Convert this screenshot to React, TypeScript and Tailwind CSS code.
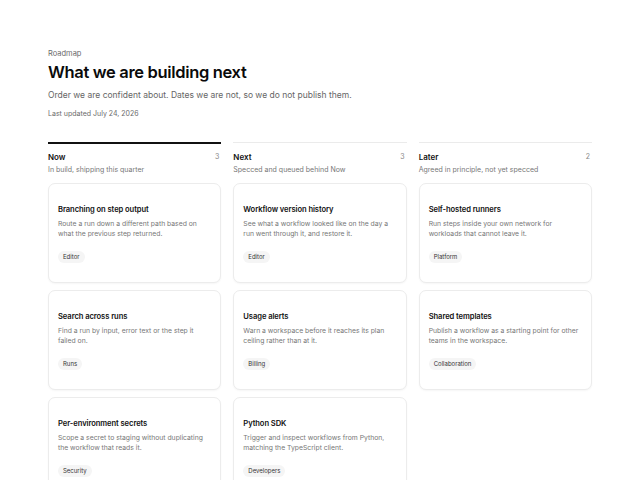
const columns = [
    {
        name: "Now",
        note: "In build, shipping this quarter",
        active: true,
        items: [
            { title: "Branching on step output", body: "Route a run down a different path based on what the previous step returned.", tag: "Editor" },
            { title: "Search across runs", body: "Find a run by input, error text or the step it failed on.", tag: "Runs" },
            { title: "Per-environment secrets", body: "Scope a secret to staging without duplicating the workflow that reads it.", tag: "Security" },
        ],
    },
    {
        name: "Next",
        note: "Specced and queued behind Now",
        active: false,
        items: [
            { title: "Workflow version history", body: "See what a workflow looked like on the day a run went through it, and restore it.", tag: "Editor" },
            { title: "Usage alerts", body: "Warn a workspace before it reaches its plan ceiling rather than at it.", tag: "Billing" },
            { title: "Python SDK", body: "Trigger and inspect workflows from Python, matching the TypeScript client.", tag: "Developers" },
        ],
    },
    {
        name: "Later",
        note: "Agreed in principle, not yet specced",
        active: false,
        items: [
            { title: "Self-hosted runners", body: "Run steps inside your own network for workloads that cannot leave it.", tag: "Platform" },
            { title: "Shared templates", body: "Publish a workflow as a starting point for other teams in the workspace.", tag: "Collaboration" },
        ],
    },
];

export default function App() {
    return (
        <main className="min-h-screen bg-white px-[48px] pt-[49px] pb-10 text-[#111] font-['Inter',sans-serif]">
            <p className="text-[7.5px] leading-[10px] text-[#6b6b6b]">Roadmap</p>
            <h1 className="mt-[2px] text-[16.5px] leading-[22px] font-semibold tracking-[-0.02em] text-[#0a0a0a]">What we are building next</h1>
            <p className="mt-[6px] text-[8.5px] leading-[12px] text-[#666]">
                Order we are confident about. Dates we are not, so we do not publish them.
            </p>
            <p className="mt-[8px] text-[7px] leading-[10px] text-[#6b6b6b]">Last updated July 24, 2026</p>

            <div className="mt-[23px] grid grid-cols-3 gap-[12px]">
                {columns.map((col) => (
                    <section key={col.name} className="flex flex-col">
                        <div className={col.active ? "h-[2px] bg-[#111]" : "h-[1px] bg-[#ebebeb]"} />
                        <div className={col.active ? "pt-[7px]" : "pt-[8px]"}>
                            <div className="flex items-center justify-between">
                                <h2 className="text-[8px] leading-[12px] font-semibold">{col.name}</h2>
                                <span className="pr-[2px] text-[7px] leading-[12px] text-[#888]">{col.items.length}</span>
                            </div>
                            <p className="mt-[2px] text-[7px] leading-[10px] text-[#777]">{col.note}</p>
                        </div>
                        <div className="mt-[8px] flex flex-col gap-[7px]">
                            {col.items.map((item) => (
                                <article
                                    key={item.title}
                                    className="h-[100px] rounded-[7px] border border-[#ececec] bg-white px-[9px] pt-[21px] shadow-[0_1px_2px_rgba(0,0,0,0.04)]"
                                >
                                    <h3 className="text-[7.6px] leading-[10px] font-semibold tracking-[-0.01em]">{item.title}</h3>
                                    <p className="mt-[4px] text-[6.8px] leading-[9.5px] text-[#777]">{item.body}</p>
                                    <span className="mt-[13px] inline-block rounded-full bg-[#f5f5f5] px-[5px] text-[6px] leading-[12px] text-[#333]">
                                        {item.tag}
                                    </span>
                                </article>
                            ))}
                        </div>
                    </section>
                ))}
            </div>
        </main>
    );
}
